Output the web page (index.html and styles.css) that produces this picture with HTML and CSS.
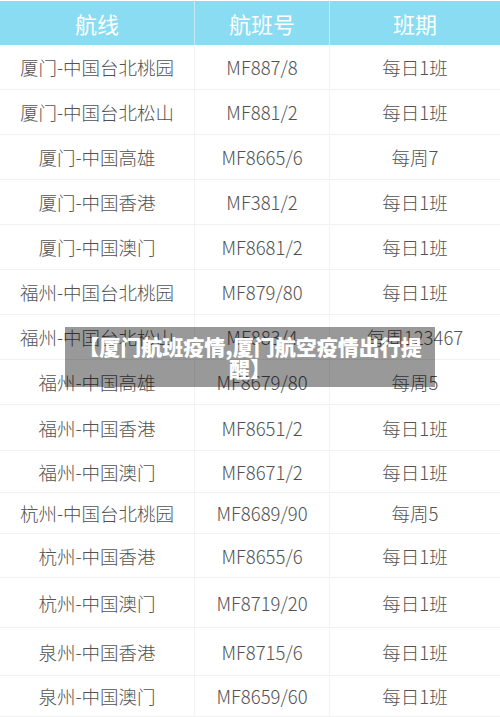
FILE: index.html
```html
<!DOCTYPE html>
<html lang="zh-CN">
<head>
<meta charset="utf-8">
<title>厦门航班疫情</title>
<link rel="stylesheet" href="styles.css">
</head>
<body>
<div class="page">
  <div class="table">
    <div class="cell head">航线</div><div class="cell head">航班号</div><div class="cell head">班期</div>
    <div class="cell">厦门-中国台北桃园</div><div class="cell">MF887/8</div><div class="cell">每日1班</div>
    <div class="cell">厦门-中国台北松山</div><div class="cell">MF881/2</div><div class="cell">每日1班</div>
    <div class="cell">厦门-中国高雄</div><div class="cell">MF8665/6</div><div class="cell">每周7</div>
    <div class="cell">厦门-中国香港</div><div class="cell">MF381/2</div><div class="cell">每日1班</div>
    <div class="cell">厦门-中国澳门</div><div class="cell">MF8681/2</div><div class="cell">每日1班</div>
    <div class="cell">福州-中国台北桃园</div><div class="cell">MF879/80</div><div class="cell">每日1班</div>
    <div class="cell">福州-中国台北松山</div><div class="cell">MF883/4</div><div class="cell">每周123467</div>
    <div class="cell">福州-中国高雄</div><div class="cell">MF8679/80</div><div class="cell">每周5</div>
    <div class="cell">福州-中国香港</div><div class="cell">MF8651/2</div><div class="cell">每日1班</div>
    <div class="cell">福州-中国澳门</div><div class="cell">MF8671/2</div><div class="cell">每日1班</div>
    <div class="cell">杭州-中国台北桃园</div><div class="cell">MF8689/90</div><div class="cell">每周5</div>
    <div class="cell">杭州-中国香港</div><div class="cell">MF8655/6</div><div class="cell">每日1班</div>
    <div class="cell">杭州-中国澳门</div><div class="cell">MF8719/20</div><div class="cell">每日1班</div>
    <div class="cell">泉州-中国香港</div><div class="cell">MF8715/6</div><div class="cell">每日1班</div>
    <div class="cell">泉州-中国澳门</div><div class="cell">MF8659/60</div><div class="cell">每日1班</div>
  </div>
  <div class="caption">【厦门航班疫情,厦门航空疫情出行提醒】</div>
</div>
</body>
</html>
```

FILE: styles.css
```css
html, body {
  margin: 0;
  padding: 0;
  overflow: hidden;
  background: #ffffff;
}

.page {
  position: relative;
  width: 500px;
  height: 717px;
  padding-top: 1px;
  box-sizing: border-box;
  font-family: "Noto Sans CJK SC", "Noto Sans", sans-serif;
}

.table {
  display: grid;
  grid-template-columns: 195px 135px 170px;
  grid-template-rows: 44px 45px 45px 45px 45px 45px 45px 45px 45px 46px 42px 41px 44px 50px 48px 41px;
}

.cell {
  display: flex;
  align-items: center;
  justify-content: center;
  box-sizing: border-box;
  border-bottom: 1px solid #f1f1f1;
  border-right: 1px solid #f3f3f3;
  font-size: 18.5px;
  font-weight: 300;
  color: #525252;
  white-space: nowrap;
}

.cell:nth-child(3n) {
  border-right: none;
}

.head {
  background: #89dcf2;
  color: #ffffff;
  font-size: 22px;
  font-weight: 400;
  border-bottom: none;
  border-right: 1px solid #c4ecf8;
}

.caption {
  position: absolute;
  left: 65px;
  top: 327px;
  width: 370px;
  box-sizing: border-box;
  padding: 8px 12px;
  background: rgba(0, 0, 0, 0.4);
  color: #ffffff;
  font-size: 21px;
  font-weight: 900;
  line-height: 22px;
  text-align: center;
}
```
